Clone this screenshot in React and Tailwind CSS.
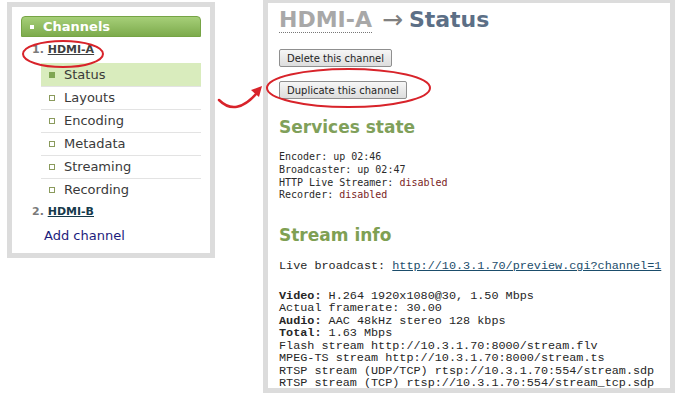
import React from "react";

// ==========================
// DATA
// ==========================
const subItems = ["Status", "Layouts", "Encoding", "Metadata", "Streaming", "Recording"];

const services = [
  { label: "Encoder: ", value: "up 02:46" },
  { label: "Broadcaster: ", value: "up 02:47" },
  { label: "HTTP Live Streamer: ", value: "disabled", off: true },
  { label: "Recorder: ", value: "disabled", off: true },
];

const streamLines = [
  { bold: "Video:", rest: " H.264 1920x1080@30, 1.50 Mbps" },
  { bold: "", rest: "Actual framerate: 30.00" },
  { bold: "Audio:", rest: " AAC 48kHz stereo 128 kbps" },
  { bold: "Total:", rest: " 1.63 Mbps" },
  { bold: "", rest: "Flash stream http://10.3.1.70:8000/stream.flv" },
  { bold: "", rest: "MPEG-TS stream http://10.3.1.70:8000/stream.ts" },
  { bold: "", rest: "RTSP stream (UDP/TCP) rtsp://10.3.1.70:554/stream.sdp" },
  { bold: "", rest: "RTSP stream (TCP) rtsp://10.3.1.70:554/stream_tcp.sdp" },
];

const sans = "font-['DejaVu_Sans',Verdana,sans-serif]";

// ==========================
// LEFT MENU
// ==========================
const Sidebar = () => (
  <div className="ml-[7px] mt-[2px] w-[208px] h-[256px] shrink-0 border-[5px] border-[#dcdcdc] bg-white px-[9px] pt-[9px]">
    <div className="h-[21px] flex items-center rounded-t-[4px] border border-[#76a445] bg-gradient-to-b from-[#a6cf78] to-[#7dab4c] pl-[8px]">
      <span className="w-[4px] h-[4px] bg-white mr-[9px]" />
      <span className={`${sans} text-[13px] font-bold text-white leading-none`}>Channels</span>
    </div>

    <div className={`${sans} h-[26px] flex items-center pl-[11px] text-[11px] font-bold`}>
      <span className="text-[#7a7a7a]">1.&nbsp;</span>
      <span className="text-[#3f3f3f] underline">HDMI-A</span>
    </div>

    <div className="ml-[20px] w-[160px]">
      {subItems.map((item, i) => (
        <div
          key={item}
          className={`h-[23px] flex items-center pl-[8px] ${
            i === 0 ? "bg-[#d9ecbd]" : "border-t border-[#e3e3e3]"
          }`}
        >
          {i === 0 ? (
            <span className="w-[6px] h-[6px] bg-[#7fa653]" />
          ) : (
            <span className="w-[6px] h-[6px] border border-[#8a9a5c]" />
          )}
          <span className={`${sans} ml-[9px] text-[13px] text-[#3a3a3a]`}>{item}</span>
        </div>
      ))}
    </div>

    <div className={`${sans} h-[23px] flex items-center pl-[11px] text-[11px] font-bold`}>
      <span className="text-[#7a7a7a]">2.&nbsp;</span>
      <span className="text-[#163a4b] underline">HDMI-B</span>
    </div>
    <div className={`${sans} h-[23px] flex items-center pl-[23px] text-[13px] text-[#1c1c7c]`}>
      Add channel
    </div>
  </div>
);

// ==========================
// STATUS PAGE
// ==========================
const Button = ({ children, className }) => (
  <div
    className={`${sans} h-[18px] flex items-center px-[7px] w-fit text-[10px] text-[#1e1e1e] border border-[#8f8f8f] rounded-[2px] bg-gradient-to-b from-[#f6f6f6] to-[#dddddd] ${className}`}
  >
    {children}
  </div>
);

const StatusPanel = () => (
  <div className="-mt-[2px] w-[412px] h-[395px] shrink-0 border-[5px] border-[#dcdcdc] bg-white pl-[11px] pt-[5px]">
    <div className={`${sans} flex items-start text-[22px] font-bold leading-[24px]`}>
      <span className="text-[#a8a8a8] border-b border-dotted border-[#777]">HDMI-A</span>
      <span className="text-[#808080] font-normal text-[25px] ml-[10px] mr-[6px] leading-[24px]">→</span>
      <span className="text-[#5c6f86]">Status</span>
    </div>

    <Button className="mt-[16px] w-[112px]">Delete this channel</Button>
    <Button className="mt-[14px] w-[127px]">Duplicate this channel</Button>

    <h2 className={`${sans} mt-[18px] text-[17px] leading-[20px] font-bold text-[#80a05a]`}>
      Services state
    </h2>
    <div className="mt-[14px] font-['DejaVu_Sans_Mono',monospace] text-[10px] leading-[12.8px] text-[#2a2a2a]">
      {services.map((s) => (
        <div key={s.label}>
          {s.label}
          <span className={s.off ? "text-[#7a2424]" : ""}>{s.value}</span>
        </div>
      ))}
    </div>

    <h2 className={`${sans} mt-[23px] text-[17px] leading-[20px] font-bold text-[#7fa053]`}>
      Stream info
    </h2>
    <div className="mt-[14.6px] font-['Liberation_Mono',monospace] text-[11.8px] leading-[12.5px] text-[#262626]">
      Live broadcast: <span className="text-[#1b4d6b] underline">http://10.3.1.70/preview.cgi?channel=1</span>
    </div>

    <div className="mt-[17.5px] font-['Liberation_Mono',monospace] text-[11.8px] leading-[12.5px] text-[#262626] whitespace-pre">
      {streamLines.map((l) => (
        <div key={l.rest}>
          {l.bold && <span className="font-bold">{l.bold}</span>}
          {l.rest}
        </div>
      ))}
    </div>
  </div>
);

// ==========================
// ANNOTATIONS (red marks over the screenshot)
// ==========================
const Annotations = () => (
  <svg className="absolute inset-0 pointer-events-none" width="677" height="398" viewBox="0 0 677 398">
    <ellipse cx="63" cy="54" rx="40" ry="13" fill="none" stroke="#d8232a" strokeWidth="2" />
    <ellipse cx="348.5" cy="88" rx="81.5" ry="19" fill="none" stroke="#d8232a" strokeWidth="2" />
    <path d="M219 100 Q236 117 257 93" fill="none" stroke="#d8232a" strokeWidth="2.5" strokeLinecap="round" />
    <path d="M262 86 L251 90 L259 97 Z" fill="#d8232a" />
  </svg>
);

export default function App() {
  return (
    <div className="relative w-[677px] h-[398px] bg-white overflow-hidden flex">
      <Sidebar />
      <div className="w-[48px] shrink-0" />
      <StatusPanel />
      <Annotations />
    </div>
  );
}
